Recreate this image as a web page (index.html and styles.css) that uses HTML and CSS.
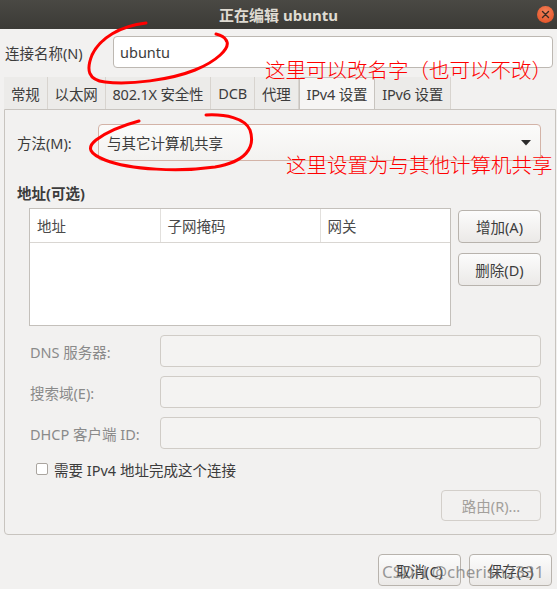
FILE: index.html
```html
<!DOCTYPE html>
<html lang="zh-CN">
<head>
    <meta charset="UTF-8">
    <meta name="viewport" content="width=device-width, initial-scale=1.0">
    <title>正在编辑 ubuntu</title>
    <link rel="stylesheet" href="styles.css">
</head>
<body>

<div class="window">
    <header class="titlebar">
        <span></span>
        <span class="title">正在编辑 ubuntu</span>
        <button class="close" aria-label="关闭">
            <svg width="9" height="9" viewBox="0 0 9 9">
                <path d="M1.5 1.5 L7.5 7.5 M7.5 1.5 L1.5 7.5" stroke="#3a2a22" stroke-width="1.4" stroke-linecap="round"/>
            </svg>
        </button>
    </header>

    <div class="name-row">
        <label for="conn-name">连接名称(N)</label>
        <input id="conn-name" class="entry" value="ubuntu">
    </div>

    <nav class="tabs">
        <span class="tab">常规</span>
        <span class="tab">以太网</span>
        <span class="tab">802.1X 安全性</span>
        <span class="tab">DCB</span>
        <span class="tab">代理</span>
        <span class="tab active">IPv4 设置</span>
        <span class="tab">IPv6 设置</span>
    </nav>

    <div class="panel">
        <div class="method-row">
            <label>方法(M):</label>
            <div class="combo">
                <span>与其它计算机共享</span>
                <svg width="10" height="6" viewBox="0 0 10 6"><path d="M0 0 H10 L5 5.5 Z" fill="#2b2b2b"/></svg>
            </div>
        </div>

        <h2>地址(可选)</h2>

        <div class="address-row">
            <div class="addr-list">
                <table>
                    <thead>
                        <tr>
                            <th>地址</th>
                            <th>子网掩码</th>
                            <th>网关</th>
                        </tr>
                    </thead>
                </table>
            </div>
            <div class="side-buttons">
                <button class="btn">增加(A)</button>
                <button class="btn">删除(D)</button>
            </div>
        </div>

        <div class="form-grid">
            <label>DNS 服务器:</label>
            <input class="entry disabled" disabled>
            <label>搜索域(E):</label>
            <input class="entry disabled" disabled>
            <label>DHCP 客户端 ID:</label>
            <input class="entry disabled" disabled>
        </div>

        <label class="check-row">
            <span class="checkbox"></span>
            需要 IPv4 地址完成这个连接
        </label>

        <div class="route-row">
            <button class="btn btn-disabled">路由(R)...</button>
        </div>
    </div>

    <div class="actions">
        <button class="btn">取消(C)</button>
        <button class="btn">保存(S)</button>
    </div>

    <!-- annotations drawn on top of the screenshot -->
    <svg class="scribbles" width="557" height="589" viewBox="0 0 557 589">
        <path d="M146,23 C120,26 100,38 92,55 C86,70 88,80 105,82 C130,85 170,80 195,70 C215,62 232,48 226,40 C224,36 220,35 216,34"
              fill="none" stroke="#f00" stroke-width="3" stroke-linecap="round"/>
        <path d="M206,115 C225,114 245,118 250,130 C256,148 245,162 215,167 C180,172 130,170 105,160 C90,154 86,148 96,140 C108,131 124,125 139,121"
              fill="none" stroke="#f00" stroke-width="3" stroke-linecap="round"/>
    </svg>
    <span class="note note-name">这里可以改名字（也可以不改）</span>
    <span class="note note-method">这里设置为与其他计算机共享</span>
    <span class="watermark">CSDN @cherish2331</span>
</div>

</body>
</html>
```

FILE: styles.css
```css
* {
    box-sizing: border-box;
}
body {
    margin: 0;
    background-color: #f2f1f0;
    font-family: "Noto Sans", "Noto Sans CJK SC", sans-serif;
    font-size: 14.5px;
    color: #3c3c3c;
    overflow: hidden;
}
.window {
    position: relative;
    width: 557px;
    height: 589px;
}
.titlebar {
    display: grid;
    grid-template-columns: 1fr auto 1fr;
    align-items: center;
    height: 29px;
    background: linear-gradient(#4a4944, #3b3a36);
    color: #dfdbd2;
    font-weight: bold;
    font-size: 15px;
}
.close {
    justify-self: end;
    display: flex;
    align-items: center;
    justify-content: center;
    width: 17px;
    height: 17px;
    margin-right: 3px;
    padding: 0;
    border: none;
    border-radius: 50%;
    background: radial-gradient(circle at 50% 35%, #f5835a, #e04a1f);
}
.name-row {
    display: grid;
    grid-template-columns: 108px 1fr;
    align-items: center;
    margin: 7px 4px 0 5px;
}
.entry {
    height: 32px;
    padding: 0 6px;
    border: 1px solid #bdb8b2;
    border-radius: 4px;
    background: #fff;
    font: inherit;
    color: #3c3c3c;
}
.entry.disabled {
    background: #f4f3f2;
    border-color: #d0ccc7;
}
.tabs {
    display: flex;
    height: 32px;
    margin: 9px 0 0 4px;
}
.tab {
    display: flex;
    align-items: center;
    padding: 0 7px;
    background: #ecebe9;
    border-right: 1px solid #d8d4cf;
    letter-spacing: -0.2px;
}
.tab.active {
    background: #f6f5f4;
    border: 1px solid #c8c4bf;
    border-bottom: none;
    border-radius: 3px 3px 0 0;
}
.panel {
    margin: 0 1px 0 4px;
    padding: 14px 14px 13px 12px;
    border: 1px solid #c8c4bf;
    border-radius: 0 0 4px 4px;
}
.method-row {
    display: grid;
    grid-template-columns: 81px 1fr;
    align-items: center;
}
.combo {
    display: flex;
    align-items: center;
    justify-content: space-between;
    height: 37px;
    padding: 0 9px 0 8px;
    border: 1px solid #d3b3a7;
    border-radius: 4px;
    background: linear-gradient(#fbfbfa, #f3f2f0);
}
h2 {
    margin: 22px 0 0;
    font-size: 14.5px;
    line-height: 20px;
    font-weight: bold;
}
.address-row {
    display: flex;
    gap: 7px;
    margin: 5px 0 0 12px;
}
.addr-list {
    flex: 1;
    height: 118px;
    border: 1px solid #c4c0bb;
    background: #fff;
}
table {
    width: 100%;
    border-collapse: collapse;
}
th {
    height: 33px;
    padding: 0 7px;
    text-align: left;
    font-weight: normal;
    color: #4a4a4a;
    border-bottom: 1px solid #d9d6d2;
    border-right: 1px solid #e2e0dd;
}
th:nth-child(1) {
    width: 130px;
}
th:nth-child(2) {
    width: 160px;
}
th:last-child {
    border-right: none;
}
.side-buttons {
    display: flex;
    flex-direction: column;
    gap: 10px;
    width: 83px;
    padding-top: 2px;
}
.btn {
    height: 33px;
    padding: 0;
    border: 1px solid #b8b3ad;
    border-radius: 4px;
    background: linear-gradient(#fcfcfc, #ebe9e7);
    font: inherit;
    color: #3c3c3c;
}
.btn-disabled {
    border-color: #d3cfca;
    background: #f2f1f0;
    color: #a3a09b;
}
.form-grid {
    display: grid;
    grid-template-columns: 130px 1fr;
    align-items: center;
    row-gap: 9px;
    margin: 9px 0 0 13px;
}
.form-grid label {
    color: #8a8a8a;
}
.check-row {
    display: flex;
    align-items: center;
    gap: 6px;
    height: 20px;
    margin: 10px 0 0 19px;
}
.checkbox {
    width: 12px;
    height: 12px;
    border: 1px solid #aaa59f;
    border-radius: 2px;
    background: #fff;
}
.route-row {
    display: flex;
    justify-content: flex-end;
    margin-top: 11px;
}
.route-row .btn {
    width: 100px;
    height: 31px;
}
.actions {
    display: flex;
    justify-content: flex-end;
    gap: 8px;
    margin: 19px 5px 0 0;
}
.actions .btn {
    width: 83px;
    height: 32px;
}
.scribbles {
    position: absolute;
    left: 0;
    top: 0;
    pointer-events: none;
}
.note {
    position: absolute;
    font-family: "Noto Sans CJK SC", sans-serif;
    font-size: 20.5px;
    font-weight: 300;
    line-height: 24px;
    color: #f00;
    white-space: nowrap;
}
.note-name {
    left: 265px;
    top: 57px;
}
.note-method {
    left: 286px;
    top: 152px;
}
.watermark {
    position: absolute;
    left: 382px;
    top: 560px;
    font-size: 17px;
    color: rgba(110, 110, 110, 0.7);
    white-space: nowrap;
    pointer-events: none;
}
```
